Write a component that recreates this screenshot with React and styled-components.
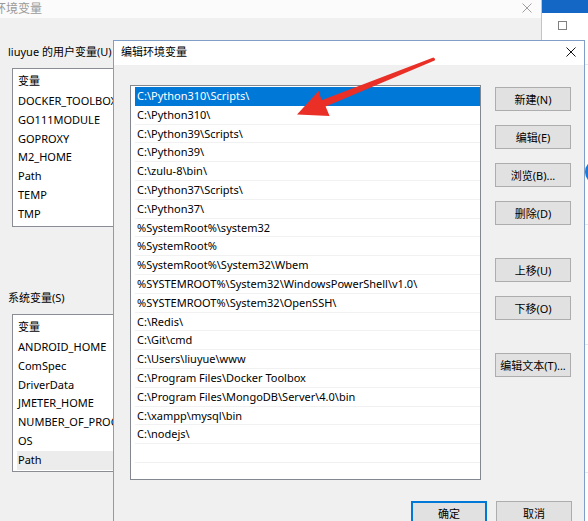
import React from "react";
import styled, { createGlobalStyle } from "styled-components";

const Global = createGlobalStyle`
  html, body { margin: 0; padding: 0; background: #f0f0f0; overflow: hidden; }
  * { box-sizing: border-box; }
  body { font-family: "Noto Sans", "Noto Sans CJK SC", sans-serif; font-size: 11px; color: #000; }
`;

const Desktop = styled.div`
  position: relative;
  width: 588px;
  height: 521px;
  overflow: hidden;
  background: #f0f0f0;
`;

const BackWindow = styled.div`
  position: absolute;
  left: -14px;
  top: 0;
  width: 555px;
  height: 540px;
  background: #f0f0f0;
  display: flex;
  flex-direction: column;
`;

const BackTitle = styled.div`
  height: 18px;
  background: #fbfbfb;
  display: flex;
  align-items: center;
  justify-content: space-between;
  padding: 0 9px 2px 8px;
  color: #9a9a9a;
  font-size: 12px;
`;

const BackBody = styled.div`
  display: flex;
  flex-direction: column;
  padding-left: 22px;
  padding-right: 12px;
`;

const GroupLabel = styled.div`
  height: 16px;
  line-height: 16px;
  margin-top: ${(p) => p.$top}px;
  white-space: nowrap;
`;

const VarList = styled.div`
  margin-top: 8px;
  margin-left: 4px;
  height: ${(p) => p.$h}px;
  background: #fff;
  border: 1px solid #8a8d94;
  display: flex;
  flex-direction: column;
`;

const VarHeader = styled.div`
  height: 23px;
  line-height: 23px;
  padding-left: 5px;
`;

const VarRow = styled.div`
  height: 18.8px;
  line-height: 18.8px;
  margin-left: 4px;
  padding-left: 1px;
  white-space: nowrap;
  background: ${(p) => (p.$hl ? "#ececec" : "transparent")};
`;

const RightWindow = styled.div`
  position: absolute;
  left: 541px;
  top: 0;
  width: 60px;
  height: 521px;
  background: #fff;
  border-left: 1px solid #c4c4c4;
  display: flex;
  flex-direction: column;
`;

const BlueBar = styled.div`
  height: 13px;
  background: #1467c4;
`;

const MaxBox = styled.div`
  width: 9px;
  height: 9px;
  border: 1px solid #808080;
  margin: 8px 0 0 16px;
`;

const StripLine = styled.div`
  height: 1px;
  background: #e6e6e6;
  margin-top: ${(p) => p.$top}px;
`;

const BlueDot = styled.div`
  position: absolute;
  left: 43px;
  top: 160px;
  width: 22px;
  height: 24px;
  border-radius: 50%;
  background: #1c7ad6;
`;

const Dialog = styled.div`
  position: absolute;
  left: 113px;
  top: 40px;
  width: 472px;
  height: 500px;
  background: #f0f0f0;
  border: 1px solid #7f9fc8;
  display: flex;
  flex-direction: column;
`;

const DialogTitle = styled.div`
  height: 24px;
  background: #fff;
  display: flex;
  align-items: flex-start;
  justify-content: space-between;
  padding: 3px 8px 0 7px;
  line-height: 16px;
  font-size: 11px;
`;

const CloseIcon = styled.svg`
  margin-top: 3px;
`;

const DialogBody = styled.div`
  display: flex;
  flex-direction: column;
  padding: 20px 12px 0 16px;
`;

const TopArea = styled.div`
  display: flex;
  align-items: flex-start;
`;

const PathList = styled.div`
  width: 351px;
  height: 395px;
  background: #fff;
  border: 1px solid #828790;
  padding-top: 1px;
  display: flex;
  flex-direction: column;
  overflow: hidden;
`;

const PathRow = styled.div`
  height: 18.8px;
  line-height: 18px;
  margin-left: 4px;
  padding-left: 2px;
  white-space: nowrap;
  border-bottom: 1px solid ${(p) => (p.$selected ? "#0078d7" : "#f1f1f1")};
  background: ${(p) => (p.$selected ? "#0078d7" : "transparent")};
  color: ${(p) => (p.$selected ? "#fff" : "#000")};
`;

const ButtonColumn = styled.div`
  margin-left: 14px;
  padding-top: 2px;
  display: flex;
  flex-direction: column;
`;

const Button = styled.div`
  width: 76px;
  height: 24px;
  display: flex;
  align-items: center;
  justify-content: center;
  background: #e1e1e1;
  border: 1px solid ${(p) => (p.$default ? "#0078d7" : "#adadad")};
  box-shadow: ${(p) => (p.$default ? "inset 0 0 0 1px #0078d7" : "none")};
  margin-top: ${(p) => p.$gap || 0}px;
  white-space: nowrap;
`;

const Footer = styled.div`
  display: flex;
  justify-content: flex-end;
  gap: 9px;
  margin-top: 21px;
`;

const Arrow = styled.svg`
  position: absolute;
  left: 0;
  top: 0;
  pointer-events: none;
`;

const userVars = ["DOCKER_TOOLBOX_INSTALL_PATH", "GO111MODULE", "GOPROXY", "M2_HOME", "Path", "TEMP", "TMP"];
const sysVars = ["ANDROID_HOME", "ComSpec", "DriverData", "JMETER_HOME", "NUMBER_OF_PROCESSORS", "OS", "Path"];

const paths = [
  "C:\\Python310\\Scripts\\",
  "C:\\Python310\\",
  "C:\\Python39\\Scripts\\",
  "C:\\Python39\\",
  "C:\\zulu-8\\bin\\",
  "C:\\Python37\\Scripts\\",
  "C:\\Python37\\",
  "%SystemRoot%\\system32",
  "%SystemRoot%",
  "%SystemRoot%\\System32\\Wbem",
  "%SYSTEMROOT%\\System32\\WindowsPowerShell\\v1.0\\",
  "%SYSTEMROOT%\\System32\\OpenSSH\\",
  "C:\\Redis\\",
  "C:\\Git\\cmd",
  "C:\\Users\\liuyue\\www",
  "C:\\Program Files\\Docker Toolbox",
  "C:\\Program Files\\MongoDB\\Server\\4.0\\bin",
  "C:\\xampp\\mysql\\bin",
  "C:\\nodejs\\",
  "",
];

const sideButtons = [
  { label: "新建(N)", gap: 0 },
  { label: "编辑(E)", gap: 14 },
  { label: "浏览(B)...", gap: 14 },
  { label: "删除(D)", gap: 14 },
  { label: "上移(U)", gap: 33 },
  { label: "下移(O)", gap: 14 },
  { label: "编辑文本(T)...", gap: 33 },
];

const Cross = ({ size, color }) => (
  <svg width={size} height={size} viewBox="0 0 10 10">
    <path d="M0.5 0.5 L9.5 9.5 M9.5 0.5 L0.5 9.5" stroke={color} strokeWidth="1" fill="none" />
  </svg>
);

export default function App() {
  return (
    <>
      <Global />
      <Desktop>
        <BackWindow>
          <BackTitle>
            <span>环境变量</span>
            <Cross size={10} color="#a0a0a0" />
          </BackTitle>
          <BackBody>
            <GroupLabel $top={26}>liuyue 的用户变量(U)</GroupLabel>
            <VarList $h={159}>
              <VarHeader>变量</VarHeader>
              {userVars.map((v) => (
                <VarRow key={v}>{v}</VarRow>
              ))}
            </VarList>
            <GroupLabel $top={63}>系统变量(S)</GroupLabel>
            <VarList $h={158}>
              <VarHeader>变量</VarHeader>
              {sysVars.map((v, i) => (
                <VarRow key={v + i} $hl={i === sysVars.length - 1}>
                  {v}
                </VarRow>
              ))}
            </VarList>
          </BackBody>
        </BackWindow>

        <RightWindow>
          <BlueBar />
          <MaxBox />
          <StripLine $top={34} />
          <StripLine $top={159} />
          <StripLine $top={119} />
          <StripLine $top={127} />
          <BlueDot />
        </RightWindow>

        <Dialog>
          <DialogTitle>
            <span>编辑环境变量</span>
            <CloseIcon width="10" height="10" viewBox="0 0 10 10">
              <path d="M0.5 0.5 L9.5 9.5 M9.5 0.5 L0.5 9.5" stroke="#111" strokeWidth="1" fill="none" />
            </CloseIcon>
          </DialogTitle>
          <DialogBody>
            <TopArea>
              <PathList>
                {paths.map((p, i) => (
                  <PathRow key={i} $selected={i === 0}>
                    {p}
                  </PathRow>
                ))}
              </PathList>
              <ButtonColumn>
                {sideButtons.map((b) => (
                  <Button key={b.label} $gap={b.gap}>
                    {b.label}
                  </Button>
                ))}
              </ButtonColumn>
            </TopArea>
            <Footer>
              <Button $default>确定</Button>
              <Button>取消</Button>
            </Footer>
          </DialogBody>
        </Dialog>

        <Arrow width="588" height="521" viewBox="0 0 588 521">
          <path
            d="M434.6 60.6 Q436 58.6 433.4 57.4 L321.5 100.2 L318.6 91 L297 114.5 L329.6 116 L325.6 106.6 Z"
            fill="#ea2f27"
          />
        </Arrow>
      </Desktop>
    </>
  );
}
